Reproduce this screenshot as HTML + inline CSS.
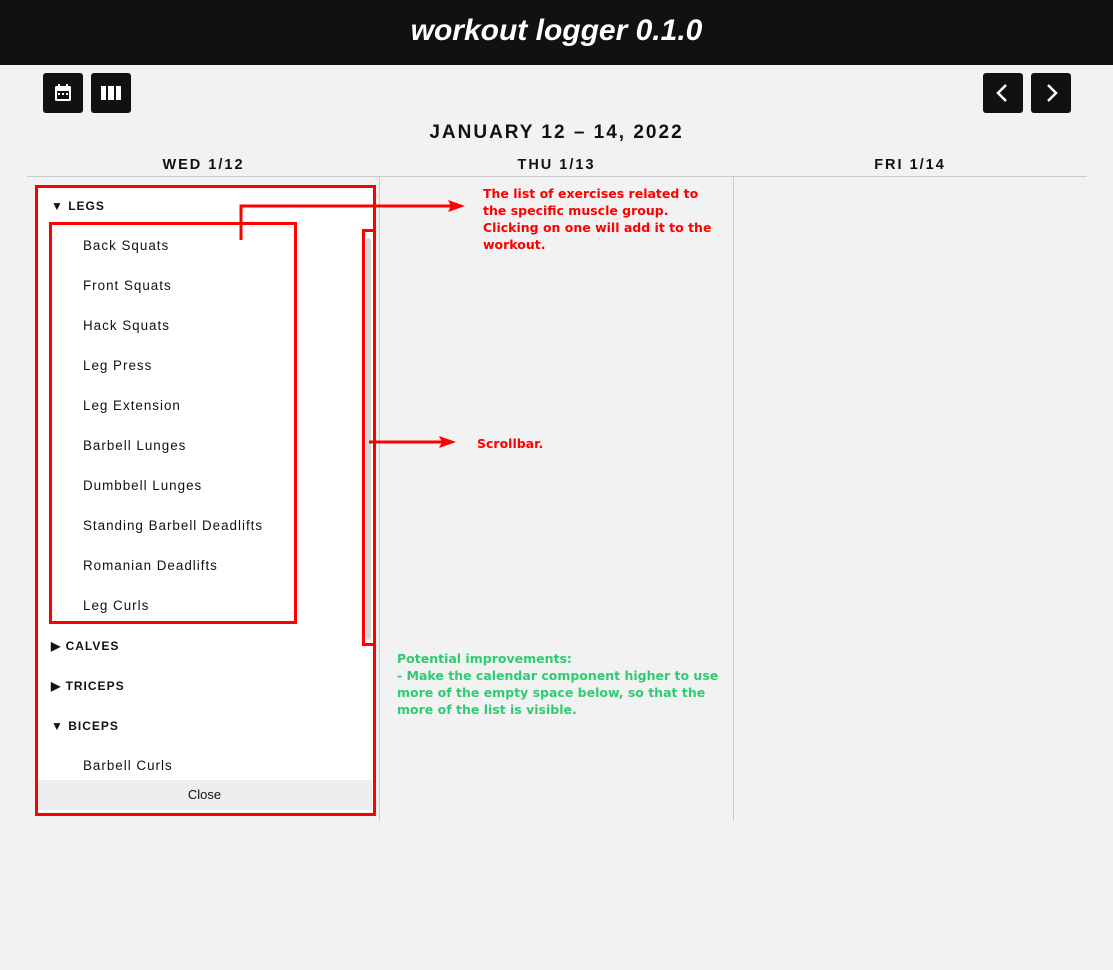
<!DOCTYPE html>
<html><head><style>
body{margin:0;width:1113px;height:970px;background:#f2f2f2;font-family:"Liberation Sans",sans-serif;position:relative;overflow:hidden}
.hdr{position:absolute;left:0;top:0;width:1113px;height:65px;background:#111;color:#fff;text-align:center;font:italic bold 30px/62px "Liberation Sans",sans-serif}
.btn{position:absolute;top:73px;width:40px;height:40px;background:#111;border-radius:3px}
.t{position:absolute;font-weight:bold;letter-spacing:1.5px;color:#111}
.a{position:absolute;background:#fff}
.it{position:absolute;left:83px;font-size:13.4px;letter-spacing:1px;color:#111}
.grp{position:absolute;left:51px;font-size:12px;font-weight:bold;letter-spacing:1px;color:#111}
.note{position:absolute;font-weight:bold;line-height:17px;font-family:"DejaVu Sans",sans-serif;font-size:12.5px}
</style></head><body>
<div class="hdr">workout logger 0.1.0</div>
<div class="btn" style="left:43px"><svg width="40" height="40"><rect x="12" y="13" width="16" height="15" rx="1.5" fill="#fff"/><rect x="14" y="18" width="12" height="8" fill="#111"/><rect x="15" y="11" width="2" height="4" fill="#fff"/><rect x="23" y="11" width="2" height="4" fill="#fff"/><rect x="15" y="20" width="2" height="2" fill="#fff"/><rect x="19" y="20" width="2" height="2" fill="#fff"/><rect x="23" y="20" width="2" height="2" fill="#fff"/></svg></div>
<div class="btn" style="left:91px"><svg width="40" height="40"><rect x="10" y="13" width="5" height="14" fill="#fff"/><rect x="17" y="13" width="6" height="14" fill="#fff"/><rect x="25" y="13" width="5" height="14" fill="#fff"/></svg></div>
<div class="btn" style="left:983px"><svg width="40" height="40"><path d="M23 12 L15 20 L23 28" stroke="#fff" stroke-width="2.5" fill="none"/></svg></div>
<div class="btn" style="left:1031px"><svg width="40" height="40"><path d="M17 12 L25 20 L17 28" stroke="#fff" stroke-width="2.5" fill="none"/></svg></div>
<div class="t" style="left:0;width:1113px;text-align:center;top:122px;font-size:19px;letter-spacing:2px">JANUARY 12 – 14, 2022</div>
<div class="t" style="left:27px;width:353px;text-align:center;top:157px;font-size:14.5px;letter-spacing:2px">WED 1/12</div>
<div class="t" style="left:380px;width:353px;text-align:center;top:157px;font-size:14.5px;letter-spacing:2px">THU 1/13</div>
<div class="t" style="left:733px;width:354px;text-align:center;top:157px;font-size:14.5px;letter-spacing:2px">FRI 1/14</div>
<div style="position:absolute;left:27px;top:176px;width:1060px;height:1px;background:#ccc"></div>
<div style="position:absolute;left:379px;top:177px;width:1px;height:644px;background:#ccc"></div>
<div style="position:absolute;left:733px;top:177px;width:1px;height:644px;background:#ccc"></div>
<div class="a" style="left:37px;top:187px;width:336px;height:625px"></div>
<div style="position:absolute;left:37px;top:780px;width:335px;height:30px;background:#eee;text-align:center;font-size:13px;line-height:30px;color:#111">Close</div>
<div style="position:absolute;left:366px;top:238px;width:5px;height:402px;background:#d8d8d8;border-radius:3px"></div>
<div class="grp" style="top:199px">▼ LEGS</div>
<div class="it" style="top:238px">Back Squats</div>
<div class="it" style="top:278px">Front Squats</div>
<div class="it" style="top:318px">Hack Squats</div>
<div class="it" style="top:358px">Leg Press</div>
<div class="it" style="top:398px">Leg Extension</div>
<div class="it" style="top:438px">Barbell Lunges</div>
<div class="it" style="top:478px">Dumbbell Lunges</div>
<div class="it" style="top:518px">Standing Barbell Deadlifts</div>
<div class="it" style="top:558px">Romanian Deadlifts</div>
<div class="it" style="top:598px">Leg Curls</div>
<div class="grp" style="top:639px">▶ CALVES</div>
<div class="grp" style="top:679px">▶ TRICEPS</div>
<div class="grp" style="top:719px">▼ BICEPS</div>
<div class="it" style="top:758px">Barbell Curls</div>
<div style="position:absolute;left:35px;top:185px;width:335px;height:625px;border:3px solid red"></div>
<div style="position:absolute;left:49px;top:222px;width:242px;height:396px;border:3px solid red"></div>
<div style="position:absolute;left:362px;top:229px;width:8px;height:411px;border:3px solid red"></div>
<svg style="position:absolute;left:0;top:0" width="1113" height="970"><path d="M241 240 V206 H455" stroke="red" stroke-width="3" fill="none"/><path d="M465 206 L448 200 L451 206 L448 212Z" fill="red"/><path d="M369 442 H445" stroke="red" stroke-width="3"/><path d="M456 442 L439 436 L442 442 L439 448Z" fill="red"/></svg>
<div class="note" style="left:483px;top:185px;color:#f00">The list of exercises related to<br>the specific muscle group.<br>Clicking on one will add it to the<br>workout.</div>
<div class="note" style="left:477px;top:435px;color:#f00">Scrollbar.</div>
<div class="note" style="left:397px;top:650px;color:#2ecc71">Potential improvements:<br>- Make the calendar component higher to use<br>more of the empty space below, so that the<br>more of the list is visible.</div>
</body></html>
